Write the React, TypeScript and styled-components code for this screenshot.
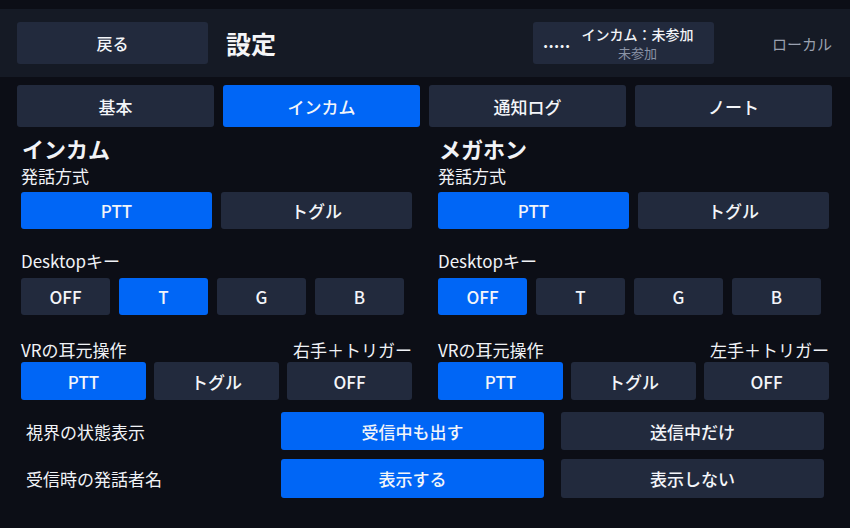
import styled, { createGlobalStyle } from 'styled-components';

const GlobalStyle = createGlobalStyle`
  html, body {
    margin: 0;
    padding: 0;
    background: #0c0e16;
  }
  body {
    font-family: "Noto Sans CJK JP", "Noto Sans", sans-serif;
    color: #f1f3f7;
  }
  * { box-sizing: border-box; }
`;

const Page = styled.div`
  width: 850px;
  height: 528px;
  padding-top: 9px;
  overflow: hidden;
`;

const Header = styled.header`
  height: 68px;
  background: #151a25;
  display: flex;
  align-items: center;
  gap: 18px;
  padding: 0 18px 0 17px;
`;

const Btn = styled.button<{ $active?: boolean; $h?: number; $size?: number }>`
  height: ${({ $h }) => $h ?? 38}px;
  border: none;
  border-radius: 3px;
  background: ${({ $active }) => ($active ? '#0066f6' : '#222a3d')};
  color: #f3f5f9;
  font-family: inherit;
  font-size: ${({ $size }) => $size ?? 17}px;
  font-weight: 500;
  display: flex;
  align-items: center;
  justify-content: center;
  padding: 0;
  cursor: pointer;
`;

const BackBtn = styled(Btn)`
  width: 191px;
`;

const Title = styled.h1`
  margin: 0;
  font-size: 25px;
  font-weight: 700;
  color: #f5f6f8;
`;

const Status = styled.div`
  margin-left: auto;
  width: 181px;
  height: 42px;
  border-radius: 3px;
  background: #222a3d;
  display: flex;
  align-items: center;
  padding: 0 10px;
  gap: 13px;
`;

const Dots = styled.span`
  font-size: 16px;
  font-weight: 700;
  letter-spacing: 0.3px;
  line-height: 1;
  margin-top: -4px;
`;

const StatusText = styled.div`
  display: flex;
  flex-direction: column;
  align-items: center;
  gap: 3px;
  margin-left: -2px;
`;

const StatusMain = styled.span`
  font-size: 14px;
  line-height: 16px;
  font-weight: 500;
`;

const StatusSub = styled.span`
  font-size: 13px;
  line-height: 15px;
  color: #8a93a6;
`;

const Local = styled.span`
  width: 100px;
  text-align: right;
  font-size: 15px;
  color: #9aa1b0;
`;

const Tabs = styled.nav`
  display: grid;
  grid-template-columns: repeat(4, 1fr);
  gap: 9px;
  padding: 8px 18px 0 17px;
`;

const Columns = styled.div`
  display: grid;
  grid-template-columns: 391px 391px;
  gap: 26px;
  padding: 8px 0 0 21px;
`;

const Section = styled.section`
  display: flex;
  flex-direction: column;
`;

const SectionTitle = styled.h2`
  margin: 0 0 0 1px;
  font-size: 22px;
  font-weight: 700;
  line-height: 26px;
`;

const LabelRow = styled.div<{ $top: number; $bottom: number }>`
  font-size: 17px;
  line-height: 20px;
  height: 20px;
  display: flex;
  justify-content: space-between;
  margin-top: ${({ $top }) => $top}px;
  margin-bottom: ${({ $bottom }) => $bottom}px;
`;

const BtnGroup = styled.div<{ $cols: string; $gap: number }>`
  display: grid;
  grid-template-columns: ${({ $cols }) => $cols};
  gap: ${({ $gap }) => $gap}px;
`;

const Options = styled.div`
  display: grid;
  grid-template-columns: 238px 263px 263px;
  column-gap: 17px;
  row-gap: 9px;
  align-items: center;
  padding: 12px 0 0 26px;
`;

const OptionLabel = styled.span`
  font-size: 17px;
`;

type ColumnProps = {
  title: string;
  desktop: string;
  hand: string;
};

function ChannelColumn({ title, desktop, hand }: ColumnProps) {
  return (
    <Section>
      <SectionTitle>{title}</SectionTitle>
      <LabelRow $top={5} $bottom={6}>
        <span>発話方式</span>
      </LabelRow>
      <BtnGroup $cols="1fr 1fr" $gap={9}>
        <Btn $active $h={37}>PTT</Btn>
        <Btn $h={37}>トグル</Btn>
      </BtnGroup>
      <LabelRow $top={22} $bottom={7}>
        <span>Desktopキー</span>
      </LabelRow>
      <BtnGroup $cols="repeat(4, 89px)" $gap={9}>
        {['OFF', 'T', 'G', 'B'].map((k) => (
          <Btn key={k} $active={k === desktop} $h={37}>
            {k}
          </Btn>
        ))}
      </BtnGroup>
      <LabelRow $top={25} $bottom={2}>
        <span>VRの耳元操作</span>
        <span>{hand}</span>
      </LabelRow>
      <BtnGroup $cols="repeat(3, 1fr)" $gap={8}>
        <Btn $active $h={38}>PTT</Btn>
        <Btn $h={38}>トグル</Btn>
        <Btn $h={38}>OFF</Btn>
      </BtnGroup>
    </Section>
  );
}

export default function App() {
  return (
    <>
      <GlobalStyle />
      <Page>
        <Header>
          <BackBtn $h={42} $size={16}>戻る</BackBtn>
          <Title>設定</Title>
          <Status>
            <Dots>.....</Dots>
            <StatusText>
              <StatusMain>インカム：未参加</StatusMain>
              <StatusSub>未参加</StatusSub>
            </StatusText>
          </Status>
          <Local>ローカル</Local>
        </Header>
        <Tabs>
          <Btn $h={42}>基本</Btn>
          <Btn $h={42} $active>インカム</Btn>
          <Btn $h={42}>通知ログ</Btn>
          <Btn $h={42}>ノート</Btn>
        </Tabs>
        <Columns>
          <ChannelColumn title="インカム" desktop="T" hand="右手＋トリガー" />
          <ChannelColumn title="メガホン" desktop="OFF" hand="左手＋トリガー" />
        </Columns>
        <Options>
          <OptionLabel>視界の状態表示</OptionLabel>
          <Btn $active>受信中も出す</Btn>
          <Btn>送信中だけ</Btn>
          <OptionLabel>受信時の発話者名</OptionLabel>
          <Btn $active $h={39}>表示する</Btn>
          <Btn $h={39}>表示しない</Btn>
        </Options>
      </Page>
    </>
  );
}
